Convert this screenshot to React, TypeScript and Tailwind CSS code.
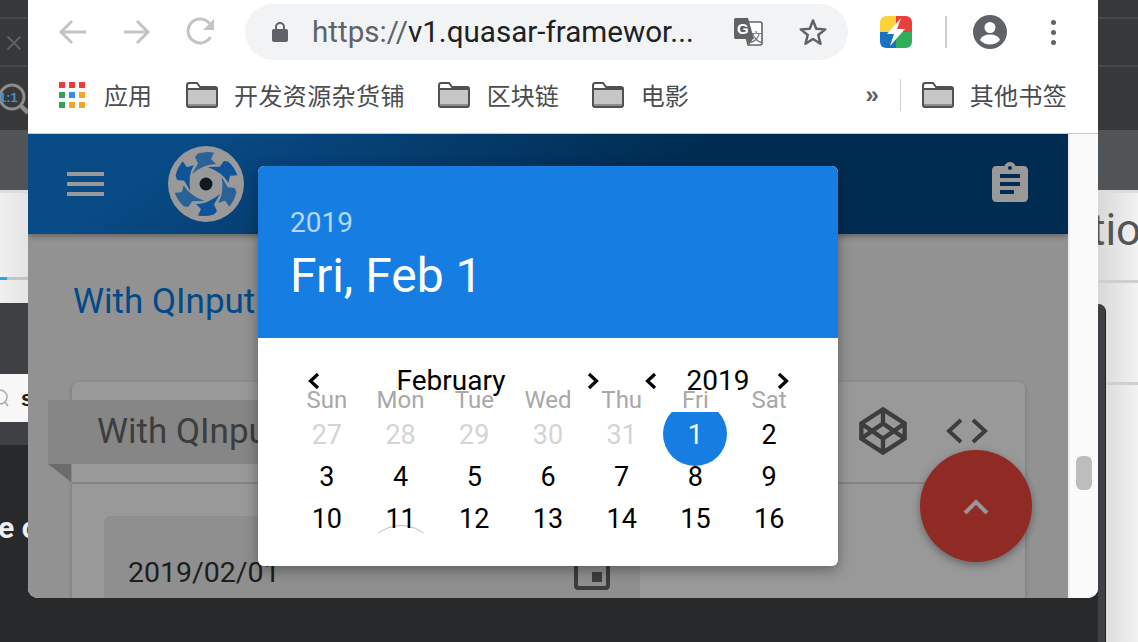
import React from "react";

const ROBOTO = "font-['Roboto',sans-serif]";
const CJK = "font-['Noto_Sans_CJK_SC','Roboto',sans-serif]";

function Folder() {
  return (
    <svg width="32" height="26" viewBox="0 0 32 26" className="shrink-0">
      <path d="M1 3.5 Q1 1 3 1 H11 L14 5 H29 Q31 5 31 7 V23 Q31 25 29 25 H3 Q1 25 1 23 Z" fill="#fff" stroke="#4f5155" strokeWidth="2" />
      <path d="M2 8 H30 V22 H2 Z" fill="#c6c6c6" />
      <path d="M2 7 H30" stroke="#4f5155" strokeWidth="2" />
      <path d="M2 22 H30 V24 H2 Z" fill="#8e8e8e" />
    </svg>
  );
}

function Chevron({ dir }: { dir: "l" | "r" }) {
  return (
    <svg width="20" height="20" viewBox="0 0 20 20" className="shrink-0">
      <path d={dir === "l" ? "M14 3 L6.5 10 L14 17" : "M6 3 L13.5 10 L6 17"} fill="none" stroke="#000" strokeWidth="3.2" />
    </svg>
  );
}

function QuasarLogo() {
  const blade = "M-8 -30.5 Q0 -33 8 -31.5 L5 -25 L10 -20 Q-2 -20 -14 -10 L-8 -20.5 L-11 -27 Z";
  const angles = [0, 60, 120, 180, 240, 300];
  return (
    <svg width="76" height="76" viewBox="-38 -38 76 76" className="shrink-0">
      <circle r="38" fill="#fff" />
      {angles.map((a, i) => (
        <path key={a} d={blade} transform={`rotate(${a})`} fill={i % 2 === 0 ? "#44a4fa" : "#1a8aff"} />
      ))}
      <circle r="6.5" fill="#1a2a3a" />
    </svg>
  );
}

const weekdays = ["Sun", "Mon", "Tue", "Wed", "Thu", "Fri", "Sat"];
const days: { d: number; muted?: boolean; sel?: boolean; ring?: boolean }[] = [
  { d: 27, muted: true }, { d: 28, muted: true }, { d: 29, muted: true }, { d: 30, muted: true }, { d: 31, muted: true },
  { d: 1, sel: true }, { d: 2 },
  { d: 3 }, { d: 4 }, { d: 5 }, { d: 6 }, { d: 7 }, { d: 8 }, { d: 9 },
  { d: 10 }, { d: 11, ring: true }, { d: 12 }, { d: 13 }, { d: 14 }, { d: 15 }, { d: 16 },
];

function DatePicker() {
  return (
    <div className={`absolute z-30 left-[230px] top-[32px] w-[580px] h-[400px] rounded-[6px] overflow-hidden bg-white shadow-[0_4px_14px_rgba(0,0,0,0.35)] ${ROBOTO}`}>
      <div className="h-[172px] bg-[#167de3] pl-[32px] pt-[43px] text-white">
        <div className="text-[28px] leading-[28px] text-white/70">2019</div>
        <div className="mt-[11px] text-[48px] leading-[56px]">Fri, Feb 1</div>
      </div>
      <div className="px-[32px] pt-[36px]">
        <div className="h-[14px] pl-[14px] flex items-center text-[28px] leading-[14px] text-black">
          <div className="w-[299px] flex items-center justify-between">
            <Chevron dir="l" />
            <span className="-ml-[5px]">February</span>
            <Chevron dir="r" />
          </div>
          <div className="ml-[38px] w-[152px] flex items-center justify-between">
            <Chevron dir="l" />
            <span className="ml-[2px]">2019</span>
            <Chevron dir="r" />
          </div>
        </div>
        <div className="grid grid-cols-7 h-[24px] text-[24px] leading-[24px] text-[#a8a8a8] text-center">
          {weekdays.map((w) => (
            <div key={w}>{w}</div>
          ))}
        </div>
        <div className="grid grid-cols-7 auto-rows-[42px] overflow-hidden text-[27px] text-center">
          {days.map((x) => (
            <div key={x.d + (x.muted ? "m" : "")} className="relative flex items-center justify-center pt-[4px]">
              {x.sel && <div className="absolute left-1/2 top-[-10px] -translate-x-1/2 w-[64px] h-[64px] rounded-full bg-[#167de3]" />}
              {x.ring && (
                <div className="absolute left-1/2 bottom-[5px] -translate-x-1/2 w-[46px] h-[8px] overflow-hidden">
                  <div className="absolute left-1/2 top-0 -translate-x-1/2 w-[76px] h-[76px] rounded-full border border-[#bdbdbd]" />
                </div>
              )}
              <span className={`relative ${x.sel ? "text-white" : x.muted ? "text-[#d4d4d4]" : "text-black"}`}>{x.d}</span>
            </div>
          ))}
        </div>
      </div>
    </div>
  );
}

function ChromeToolbar() {
  return (
    <div className="h-[64px] flex items-center pl-[28px] shrink-0">
      <svg width="32" height="32" viewBox="0 0 32 32" className="shrink-0">
        <path d="M30 16 H6 M16 5 L5 16 L16 27" fill="none" stroke="#c4c4c4" strokeWidth="3" />
      </svg>
      <svg width="32" height="32" viewBox="0 0 32 32" className="shrink-0 ml-[32px]">
        <path d="M4 16 H28 M17 5 L28 16 L17 27" fill="none" stroke="#c4c4c4" strokeWidth="3" />
      </svg>
      <svg width="32" height="32" viewBox="0 0 32 32" className="shrink-0 ml-[33px]">
        <path d="M25.5 21 A12 12 0 1 1 24.5 7.5" fill="none" stroke="#c4c4c4" strokeWidth="3" />
        <path d="M29 3 V14 H18 Z" fill="#c4c4c4" />
      </svg>
      <div className="ml-[28px] w-[603px] h-[56px] rounded-full bg-[#f1f3f4] flex items-center pl-[27px] shrink-0">
        <svg width="16" height="22" viewBox="0 0 16 22" className="shrink-0">
          <path d="M4 9 V6 A4 4 0 0 1 12 6 V9" fill="none" stroke="#5f6368" strokeWidth="2" />
          <rect x="0" y="8" width="16" height="13" rx="2" fill="#5f6368" />
        </svg>
        <span className={`ml-[24px] text-[29.6px] leading-[36px] whitespace-nowrap w-[385px] ${ROBOTO}`}>
          <span className="text-[#5f6368]">https://</span>
          <span className="text-[#202124]">v1.quasar-framewor...</span>
        </span>
        <svg width="30" height="30" viewBox="0 0 30 30" className="shrink-0 ml-[36px]">
          <path d="M10 5 H27 Q29 5 29 7 V26 Q29 28 27 28 H15 L10 5 Z" fill="#fff" stroke="#5f6368" strokeWidth="1.6" />
          <path d="M2.5 1 H15 L21 22 H2.5 Q1 22 1 20 V3 Q1 1 2.5 1 Z" fill="#5f6368" />
          <path d="M14 22 L16 28 L20 22 Z" fill="#5f6368" />
          <text x="4" y="17" fontSize="15" fontWeight="700" fill="#fff" fontFamily="Liberation Sans">G</text>
          <text x="17" y="25" fontSize="12" fill="#5f6368" fontFamily="Noto Sans CJK SC">文</text>
        </svg>
        <svg width="30" height="30" viewBox="0 0 24 24" className="shrink-0 ml-[35px]">
          <path d="M12 2.8 L14.6 9.4 L21.8 9.9 L16.2 14.4 L18 21.4 L12 17.6 L6 21.4 L7.8 14.4 L2.2 9.9 L9.4 9.4 Z" fill="none" stroke="#5f6368" strokeWidth="2" strokeLinejoin="round" />
        </svg>
      </div>
      <svg width="32" height="32" viewBox="0 0 32 32" className="shrink-0 ml-[32px] rounded-[6px]">
        <rect x="0" y="0" width="16" height="16" fill="#f8d43a" />
        <rect x="16" y="0" width="16" height="16" fill="#e8403c" />
        <rect x="0" y="16" width="16" height="16" fill="#1a73c0" />
        <rect x="16" y="16" width="16" height="16" fill="#2fad5a" />
        <path d="M21 2 L7 18 H14 L10 30 L25 13 H17 Z" fill="#fff" />
      </svg>
      <div className="ml-[33px] w-[2px] h-[32px] bg-[#d0d0d0] shrink-0" />
      <svg width="34" height="34" viewBox="0 0 34 34" className="shrink-0 ml-[26px]">
        <circle cx="17" cy="17" r="17" fill="#5f6368" />
        <circle cx="17" cy="12.5" r="5.5" fill="#fff" />
        <path d="M7 25 Q9 19.5 17 19.5 Q25 19.5 27 25 Q23 29.5 17 29.5 Q11 29.5 7 25 Z" fill="#fff" />
      </svg>
      <div className="ml-[44px] flex flex-col gap-[5px] shrink-0">
        <div className="w-[5px] h-[5px] rounded-full bg-[#5f6368]" />
        <div className="w-[5px] h-[5px] rounded-full bg-[#5f6368]" />
        <div className="w-[5px] h-[5px] rounded-full bg-[#5f6368]" />
      </div>
    </div>
  );
}

function Bookmarks() {
  const apps = ["#f23a3a", "#f23a3a", "#f23a3a", "#35a356", "#2f8ff0", "#f5a42a", "#35a356", "#f5a42a", "#f5a42a"];
  const label = `text-[24px] leading-[32px] text-[#4a4c50] whitespace-nowrap ${CJK}`;
  return (
    <div className="h-[70px] flex items-center pl-[31px] pr-[31px] pb-[7px] border-b border-[#c8c8c8] shrink-0">
      <div className="w-[26px] grid grid-cols-3 gap-[4px] shrink-0">
        {apps.map((c, i) => (
          <div key={i} className="w-[6px] h-[6px]" style={{ backgroundColor: c }} />
        ))}
      </div>
      <span className={`${label} ml-[19px]`}>应用</span>
      <div className="ml-[34px]"><Folder /></div>
      <span className={`${label} ml-[16px] tracking-[0.4px]`}>开发资源杂货铺</span>
      <div className="ml-[33px]"><Folder /></div>
      <span className={`${label} ml-[17px]`}>区块链</span>
      <div className="ml-[33px]"><Folder /></div>
      <span className={`${label} ml-[17px]`}>电影</span>
      <span className="ml-auto text-[24px] leading-[24px] font-bold text-[#5f6368] font-['Liberation_Sans',sans-serif]">»</span>
      <div className="ml-[21px] w-[1px] h-[32px] bg-[#d0d0d0]" />
      <div className="ml-[21px]"><Folder /></div>
      <span className={`${label} ml-[16px] tracking-[0.3px]`}>其他书签</span>
    </div>
  );
}

function PageHeader() {
  return (
    <div className="h-[100px] flex items-center bg-[linear-gradient(145deg,#0f7de0_15%,#014a88_58%)] shadow-[0_2px_6px_rgba(0,0,0,0.35)] shrink-0 relative">
      <div className="ml-[39px] w-[37px] flex flex-col gap-[6px] shrink-0">
        <div className="h-[4px] bg-white" />
        <div className="h-[4px] bg-white" />
        <div className="h-[4px] bg-white" />
      </div>
      <div className="ml-[64px]"><QuasarLogo /></div>
      <svg width="48" height="48" viewBox="0 0 24 24" className="ml-auto mr-[34px] shrink-0" fill="#fff">
        <path d="M19 3h-4.18C14.4 1.84 13.3 1 12 1c-1.3 0-2.4.84-2.82 2H5c-1.1 0-2 .9-2 2v14c0 1.1.9 2 2 2h14c1.1 0 2-.9 2-2V5c0-1.1-.9-2-2-2zm-7 0c.55 0 1 .45 1 1s-.45 1-1 1-1-.45-1-1 .45-1 1-1zm2 14H7v-2h7v2zm3-4H7v-2h10v2zm0-4H7V7h10v2z" />
      </svg>
    </div>
  );
}

function Card() {
  return (
    <div className="relative ml-[44px] w-[953px] h-[300px] mt-[60px] rounded-t-[6px] bg-white shadow-[0_1px_5px_rgba(0,0,0,0.2)]">
      <div className="absolute -left-[24px] top-[18px] w-[420px] h-[64px] bg-[#e0e0e0] flex items-center pl-[49px] text-[35px] text-[#666]">
        With QInput
        <div className="absolute left-0 top-[64px] w-[23px] h-[18px] bg-[#b4b4b4] [clip-path:polygon(0_0,100%_0,100%_100%)]" />
      </div>
      <div className="h-[102px] border-b-2 border-[#dcdcdc] flex items-center justify-end pb-[3px]">
        <svg width="52" height="52" viewBox="0 0 24 24" fill="none" stroke="#666" strokeWidth="2" className="shrink-0">
          <path d="M12 2 L22 8.5 V15.5 L12 22 L2 15.5 V8.5 Z M12 22 V15.5 M22 8.5 L12 15.5 L2 8.5 M2 15.5 L12 8.5 L22 15.5 M12 2 V8.5" />
        </svg>
        <svg width="42" height="30" viewBox="0 0 42 30" fill="none" stroke="#666" strokeWidth="4" className="ml-[37px] mr-[37px] shrink-0">
          <path d="M15 4 L3 15 L15 26 M27 4 L39 15 L27 26" />
        </svg>
      </div>
      <div className="pt-[32px] pl-[32px] flex">
        <div className="w-[536px] h-[112px] rounded-t-[6px] bg-[#eeeeee] flex items-center pl-[24px] text-[28.5px] text-[#333]">
          <span className="mt-[2px]">2019/02/01</span>
          <svg width="48" height="48" viewBox="0 0 24 24" fill="#666" className="ml-auto mr-[24px] shrink-0">
            <path d="M17 12h-5v5h5v-5zM16 1v2H8V1H6v2H5c-1.11 0-1.99.9-1.99 2L3 19c0 1.1.89 2 2 2h14c1.1 0 2-.9 2-2V5c0-1.1-.9-2-2-2h-1V1h-2zm3 18H5V8h14v11z" />
          </svg>
        </div>
      </div>
    </div>
  );
}

function LeftStrip() {
  return (
    <div className="w-[28px] shrink-0 h-full flex flex-col overflow-hidden">
      <div className="h-[19px] bg-[#36383a] border-b-2 border-[#47484a]" />
      <div className="h-[48px] bg-[#36383a] border-b-2 border-[#47484a] flex items-center justify-center">
        <svg width="16" height="16" viewBox="0 0 16 16" className="mt-[2px]">
          <path d="M1.5 1.5 L14.5 14.5 M14.5 1.5 L1.5 14.5" stroke="#5f6264" strokeWidth="1.8" />
        </svg>
      </div>
      <div className="h-[63px] bg-[#36383a] flex items-center">
        <svg width="28" height="44" viewBox="0 0 28 44" className="shrink-0">
          <circle cx="12" cy="20" r="12" fill="none" stroke="#8c8c8c" strokeWidth="3" />
          <path d="M20 28 L28 36" stroke="#8c8c8c" strokeWidth="4.5" />
          <text x="-1" y="25" fontSize="13" fontWeight="700" fill="#3f93d6" fontFamily="Liberation Sans">1:1</text>
        </svg>
      </div>
      <div className="h-[60px] bg-[#505456]" />
      <div className="h-[3px] bg-[#dcdcdc]" />
      <div className="h-[110px] bg-[linear-gradient(90deg,#f0f0f0,#e4e4e4)] flex flex-col justify-end pb-[23px]">
        <div className="h-[3px] bg-[#c4c4c4]"><div className="h-[3px] w-[7px] bg-[#2ba3e6]" /></div>
      </div>
      <div className="h-[71px] bg-[#3f4043]" />
      <div className="h-[48px] bg-[#f7f7f7] flex items-center">
        <svg width="9" height="20" viewBox="0 0 9 20" className="shrink-0">
          <circle cx="0" cy="9" r="7" fill="none" stroke="#aaa" strokeWidth="1.5" />
          <path d="M5 14 L8 18" stroke="#aaa" strokeWidth="1.5" />
        </svg>
        <span className="ml-[12px] text-[22px] font-bold text-[#222] font-['Liberation_Sans',sans-serif]">s</span>
      </div>
      <div className="h-[23px] bg-[#3f4043]" />
      <div className="flex-1 bg-[#28292b] pt-[65px]">
        <div className={`-ml-[2px] text-[30px] leading-[36px] font-bold text-[#eeeeee] whitespace-nowrap ${ROBOTO}`}>e c</div>
      </div>
    </div>
  );
}

function RightStrip() {
  return (
    <div className="w-[40px] shrink-0 h-full flex flex-col overflow-hidden">
      <div className="h-[130px] bg-[#36383a] flex flex-col">
        <div className="h-[19px] border-b-2 border-[#47484a]" />
        <div className="h-[48px] border-b-2 border-[#47484a]" />
      </div>
      <div className="h-[60px] bg-[#505456]" />
      <div className="h-[3px] bg-[#dcdcdc]" />
      <div className="relative flex-1 bg-[linear-gradient(90deg,#d8d8d8,#f2f2f2)] overflow-hidden">
        <div className={`-ml-[7px] mt-[12px] text-[44px] leading-[50px] text-[#555] whitespace-nowrap ${ROBOTO}`}>tio</div>
        <div className="mt-[25px] h-[3px] bg-[#cfcfcf]" />
        <div className="mt-[99px] h-[3px] bg-[#cfcfcf]" />
        <div className="absolute left-0 top-[111px] bottom-0 w-[8px] rounded-tr-[8px] bg-[#3f4043] border-r border-[#222]" />
      </div>
    </div>
  );
}

export default function App() {
  return (
    <div className="relative w-[1138px] h-[642px] overflow-hidden flex bg-[#28292b]">
      <LeftStrip />
      <div className="w-[1070px] shrink-0 h-full">
        <div className="w-full h-[598px] rounded-b-[10px] overflow-hidden bg-white flex flex-col">
          <ChromeToolbar />
          <Bookmarks />
          <div className="flex-1 flex min-h-0">
            <div className={`relative w-[1040px] shrink-0 bg-[#f4f4f4] overflow-hidden flex flex-col ${ROBOTO}`}>
              <PageHeader />
              <div className="ml-[45px] mt-[48px] h-[40px] text-[35px] leading-[40px] text-[#027be3]">With QInput</div>
              <Card />
              <div className="absolute left-[892px] top-[316px] w-[112px] h-[112px] rounded-full bg-[#ee463c] shadow-[0_3px_8px_rgba(0,0,0,0.35)] flex items-center justify-center">
                <svg width="28" height="18" viewBox="0 0 28 18" fill="none" stroke="#fff" strokeWidth="4">
                  <path d="M3 16 L14 5 L25 16" />
                </svg>
              </div>
              <div className="absolute z-20 inset-0 bg-black/40" />
              <DatePicker />
            </div>
            <div className="flex-1 bg-[#fafafa] border-l-2 border-[#eeeeee]">
              <div className="ml-[6px] mt-[322px] w-[16px] h-[34px] rounded-[6px] bg-[#bdbdbd]" />
            </div>
          </div>
        </div>
      </div>
      <RightStrip />
    </div>
  );
}
